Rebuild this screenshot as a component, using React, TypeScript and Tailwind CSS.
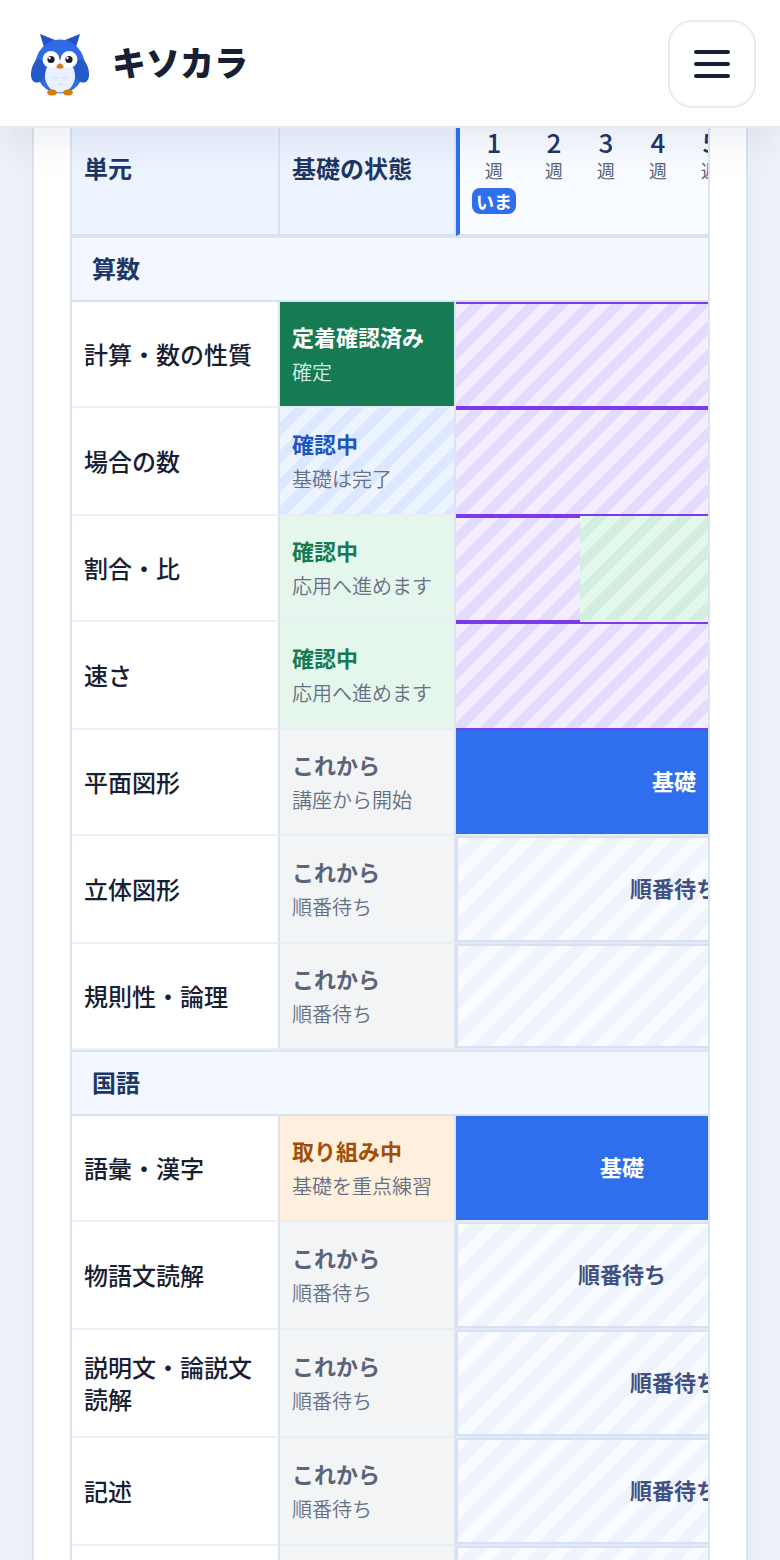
import React from "react";
import clsx from "clsx";

type Tone = "done" | "checking" | "advance" | "todo" | "active";
type BarKind = "review" | "keep" | "basic" | "queue" | "empty";

interface Bar {
  kind: BarKind;
  weeks: number;
  label?: string;
}

interface Unit {
  name: string;
  tone: Tone;
  status: string;
  note: string;
  tall?: boolean;
  bars: Bar[];
}

interface Subject {
  title: string;
  units: Unit[];
}

const WEEKS = Array.from({ length: 16 }, (_, i) => i + 1);

const waiting = { tone: "todo" as Tone, status: "これから", note: "順番待ち" };

const subjects: Subject[] = [
  {
    title: "算数",
    units: [
      {
        name: "計算・数の性質",
        tone: "done",
        status: "定着確認済み",
        note: "確定",
        bars: [{ kind: "review", weeks: 16 }],
      },
      {
        name: "場合の数",
        tone: "checking",
        status: "確認中",
        note: "基礎は完了",
        tall: true,
        bars: [{ kind: "review", weeks: 16 }],
      },
      {
        name: "割合・比",
        tone: "advance",
        status: "確認中",
        note: "応用へ進めます",
        bars: [
          { kind: "review", weeks: 2 },
          { kind: "keep", weeks: 14 },
        ],
      },
      {
        name: "速さ",
        tone: "advance",
        status: "確認中",
        note: "応用へ進めます",
        tall: true,
        bars: [{ kind: "review", weeks: 16 }],
      },
      {
        name: "平面図形",
        tone: "todo",
        status: "これから",
        note: "講座から開始",
        bars: [
          { kind: "basic", weeks: 8, label: "基礎" },
          { kind: "empty", weeks: 8 },
        ],
      },
      {
        name: "立体図形",
        ...waiting,
        tall: true,
        bars: [
          { kind: "queue", weeks: 8, label: "順番待ち" },
          { kind: "empty", weeks: 8 },
        ],
      },
      {
        name: "規則性・論理",
        ...waiting,
        bars: [{ kind: "queue", weeks: 16, label: "順番待ち" }],
      },
    ],
  },
  {
    title: "国語",
    units: [
      {
        name: "語彙・漢字",
        tone: "active",
        status: "取り組み中",
        note: "基礎を重点練習",
        bars: [
          { kind: "basic", weeks: 6, label: "基礎" },
          { kind: "empty", weeks: 10 },
        ],
      },
      {
        name: "物語文読解",
        ...waiting,
        tall: true,
        bars: [
          { kind: "queue", weeks: 6, label: "順番待ち" },
          { kind: "empty", weeks: 10 },
        ],
      },
      {
        name: "説明文・論説文読解",
        ...waiting,
        tall: true,
        bars: [
          { kind: "queue", weeks: 8, label: "順番待ち" },
          { kind: "empty", weeks: 8 },
        ],
      },
      {
        name: "記述",
        ...waiting,
        tall: true,
        bars: [
          { kind: "queue", weeks: 8, label: "順番待ち" },
          { kind: "empty", weeks: 8 },
        ],
      },
      {
        name: "知識・文法",
        ...waiting,
        bars: [{ kind: "queue", weeks: 16, label: "順番待ち" }],
      },
    ],
  },
];

const toneCell: Record<Tone, string> = {
  done: "bg-[#167a52]",
  checking:
    "bg-[repeating-linear-gradient(135deg,#edf4ff_0px,#edf4ff_10px,#dbe8ff_10px,#dbe8ff_20px)]",
  advance: "bg-[#e5f6ec]",
  todo: "bg-[#f2f4f6]",
  active: "bg-[#fef0dc]",
};

const toneStatus: Record<Tone, string> = {
  done: "text-white",
  checking: "text-[#1d56c0]",
  advance: "text-[#167a52]",
  todo: "text-[#5a6377]",
  active: "text-[#a04e08]",
};

const barCell: Record<BarKind, string> = {
  review:
    "border-y-2 border-[#7c3aed] bg-[repeating-linear-gradient(135deg,#f3edff_0px,#f3edff_10px,#e4dcfd_10px,#e4dcfd_20px)]",
  keep: "border-b-2 border-[#e7ebf6] bg-[repeating-linear-gradient(135deg,#e3f7ed_0px,#e3f7ed_10px,#d3eee0_10px,#d3eee0_20px)]",
  basic: "border-b-2 border-[#e7ebf6] bg-[#2f6fed] text-white",
  queue:
    "border-b-2 border-[#e3eaf6] bg-[repeating-linear-gradient(135deg,#f8fbff_0px,#f8fbff_12px,#eff4fc_12px,#eff4fc_24px)] text-[#415080] inset-shadow-[0_0_0_2px_#d5e1f4]",
  empty: "border-b-2 border-[#e7ebf6] bg-white",
};

const OwlLogo: React.FC = () => (
  <svg viewBox="0 0 72 74" className="h-[74px] w-[72px]" aria-hidden="true">
    <path d="M16 7 L31 13 L20 20 Z" fill="#1f55c4" />
    <path d="M56 7 L41 13 L52 20 Z" fill="#1f55c4" />
    <ellipse cx="36" cy="39.500" rx="25" ry="27" fill="#2f6be6" />
    <path d="M13 32 C7 38 5 50 9 54 C13 58 19 54 21 48 C23 41 20 31 13 32Z" fill="#2459c9" />
    <path d="M59 32 C65 38 67 50 63 54 C59 58 53 54 51 48 C49 41 52 31 59 32Z" fill="#2459c9" />
    <ellipse cx="36" cy="49" rx="15" ry="16.500" fill="#e9f1fe" />
    <circle cx="27" cy="32.500" r="8.400" fill="#fff" />
    <circle cx="45" cy="32.500" r="8.400" fill="#fff" />
    <circle cx="27" cy="32.500" r="3.600" fill="#152033" />
    <circle cx="45" cy="32.500" r="3.600" fill="#152033" />
    <circle cx="25.500" cy="31" r="1.200" fill="#fff" />
    <circle cx="43.500" cy="31" r="1.200" fill="#fff" />
    <path d="M36 36.500 C38 36.500 39.500 39 39.500 40.500 C38.500 42 33.500 42 32.500 40.500 C32.500 39 34 36.500 36 36.500Z" fill="#d97a0b" />
    <path
      d="M29 50 q2.500 3 5 0 M38 50 q2.500 3 5 0 M33.500 56.500 q2.500 3 5 0"
      fill="none"
      stroke="#cfdef8"
      strokeWidth="1.200"
    />
    <ellipse cx="28" cy="65.500" rx="4.800" ry="3" fill="#d97a0b" />
    <ellipse cx="44" cy="65.500" rx="4.800" ry="3" fill="#d97a0b" />
  </svg>
);

const Header: React.FC = () => (
  <header className="relative z-10 flex shrink-0 items-center justify-between border-b-2 border-[#e6e9f4] bg-white px-6 pt-5 pb-[18px] shadow-[0_8px_40px_rgba(30,50,110,0.10)]">
    <a href="#" className="flex items-center gap-4">
      <OwlLogo />
      <span className="pb-1 text-[34px] leading-10 font-black text-[#172033]">キソカラ</span>
    </a>
    <button
      type="button"
      aria-label="メニュー"
      className="flex size-[88px] flex-col items-center justify-center gap-2 rounded-3xl border-2 border-[#e8eaf5] bg-white"
    >
      <span className="h-1 w-9 rounded-full bg-[#172033]" />
      <span className="h-1 w-9 rounded-full bg-[#172033]" />
      <span className="h-1 w-9 rounded-full bg-[#172033]" />
    </button>
  </header>
);

const UnitRow: React.FC<{ unit: Unit }> = ({ unit }) => (
  <tr className={unit.tall ? "h-[108px]" : "h-[106px]"}>
    <th
      scope="row"
      className="border-r-2 border-b-2 border-r-[#dbe4f1] border-b-[#edf0f8] bg-white px-3 text-left text-2xl leading-8 font-medium text-[#172033]"
    >
      {unit.name}
    </th>
    <td
      className={clsx(
        "border-r-2 border-b-2 border-r-[#dbe4f1] border-b-[#e9edf7] pl-3 whitespace-nowrap",
        toneCell[unit.tone]
      )}
    >
      <div className={clsx("text-[22px] leading-9 font-bold", toneStatus[unit.tone])}>
        {unit.status}
      </div>
      <div
        className={clsx(
          "text-xl leading-9 font-[350]",
          unit.tone === "done" ? "text-[#d5f0e2]" : "text-[#667085]"
        )}
      >
        {unit.note}
      </div>
    </td>
    {unit.bars.map((bar, i) => (
      <td
        key={i}
        colSpan={bar.weeks}
        className={clsx("pb-1 text-center text-[22px] leading-8 font-bold", barCell[bar.kind])}
      >
        {bar.label}
      </td>
    ))}
  </tr>
);

const PlanTable: React.FC = () => (
  <table className="w-[1236px] table-fixed border-separate border-spacing-0">
    <colgroup>
      <col className="w-[208px]" />
      <col className="w-[176px]" />
      {WEEKS.map((week) => (
        <col key={week} className={week === 1 ? "w-[72px]" : "w-[52px]"} />
      ))}
    </colgroup>
    <thead>
      <tr className="h-[108px] align-top text-2xl leading-8 text-[#1c3765]">
        <th
          scope="col"
          className="border-r-2 border-b-2 border-[#dbe4ee] bg-[#edf3ff] px-3 pt-6 text-left font-bold"
        >
          単元
        </th>
        <th
          scope="col"
          className="border-r-2 border-b-2 border-[#dbe4ee] bg-[#edf3ff] px-3 pt-6 text-left font-bold whitespace-nowrap"
        >
          基礎の状態
        </th>
        {WEEKS.map((week) => (
          <th
            key={week}
            scope="col"
            className={clsx(
              "border-b-2 border-b-[#dbe4ee] bg-[#f8fbff] font-medium",
              week === 1 && "border-l-4 border-l-[#2f6fed]"
            )}
          >
            <div className="text-[26px] leading-7">{week}</div>
            <div className="text-lg leading-7 font-normal text-[#5a6377]">週</div>
            {week === 1 && (
              <span className="mx-auto mt-1 block h-[26px] w-11 rounded-lg bg-[#2f6fed] text-lg leading-[26px] font-bold text-white">
                いま
              </span>
            )}
          </th>
        ))}
      </tr>
    </thead>
    {subjects.map((subject) => (
      <tbody key={subject.title}>
        <tr className="h-[66px]">
          <th
            scope="rowgroup"
            colSpan={WEEKS.length + 2}
            className="border-y-2 border-[#dbe4ee] bg-[#f3f7ff] px-5 pb-0.5 text-left text-2xl leading-8 font-bold text-[#1c3765]"
          >
            {subject.title}
          </th>
        </tr>
        {subject.units.map((unit) => (
          <UnitRow key={unit.name} unit={unit} />
        ))}
      </tbody>
    ))}
  </table>
);

export default function App() {
  return (
    <div
      lang="ja"
      className="flex h-screen flex-col overflow-hidden bg-[#eff3f8] font-['Noto_Sans_CJK_JP',sans-serif]"
    >
      <Header />
      <main className="min-h-0 flex-1 px-8">
        <section className="border-x-2 border-[#dbe2ee] bg-white px-9 shadow-[0_8px_40px_rgba(60,90,170,0.06)]">
          <div className="overflow-x-auto border-x-2 border-[#dbe4f1]">
            <PlanTable />
          </div>
        </section>
      </main>
    </div>
  );
}
